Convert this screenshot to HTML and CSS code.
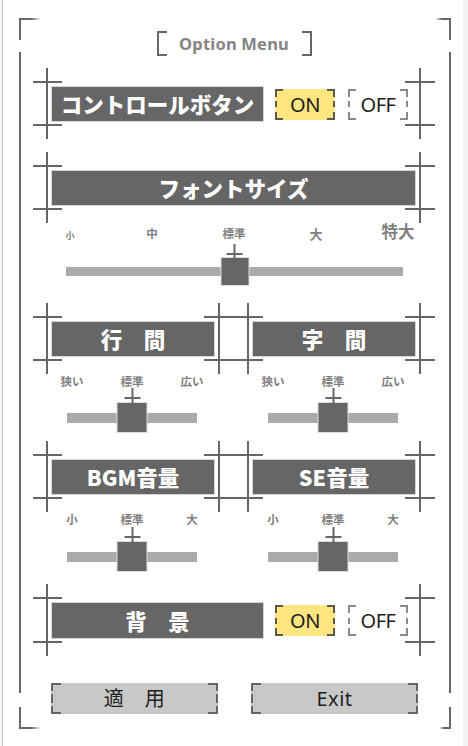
FILE: index.html
```html
<!DOCTYPE html>
<html lang="ja">
<head>
    <meta charset="UTF-8">
    <meta name="viewport" content="width=device-width, initial-scale=1.0">
    <title>Option Menu</title>
    <link rel="stylesheet" href="styles.css">
</head>
<body>
    <div class="screen">
        <div class="frame">
            <div class="title">Option Menu</div>

            <!-- Control buttons -->
            <div class="mark row">
                <div class="label label-row">コントロールボタン</div>
                <button class="toggle on">ON</button>
                <button class="toggle off">OFF</button>
            </div>

            <!-- Font size -->
            <div class="mark mark-font">
                <div class="label">フォントサイズ</div>
            </div>
            <div class="scale scale-5">
                <span class="sz1">小</span>
                <span class="sz2">中</span>
                <span class="sz2">標準</span>
                <span class="sz3">大</span>
                <span class="sz4">特大</span>
            </div>
            <div class="slider slider-lg">
                <div class="track"></div>
                <div class="thumb" style="left: 50%"></div>
            </div>

            <!-- Line / letter spacing -->
            <div class="pair pair-space">
                <div class="col">
                    <div class="mark"><div class="label">行　間</div></div>
                    <div class="scale scale-3"><span>狭い</span><span>標準</span><span>広い</span></div>
                    <div class="slider">
                        <div class="track"></div>
                        <div class="thumb" style="left: 50%"></div>
                    </div>
                </div>
                <div class="col">
                    <div class="mark"><div class="label">字　間</div></div>
                    <div class="scale scale-3"><span>狭い</span><span>標準</span><span>広い</span></div>
                    <div class="slider">
                        <div class="track"></div>
                        <div class="thumb" style="left: 50%"></div>
                    </div>
                </div>
            </div>

            <!-- Volume -->
            <div class="pair pair-sound">
                <div class="col">
                    <div class="mark"><div class="label">BGM音量</div></div>
                    <div class="scale scale-3"><span>小</span><span>標準</span><span>大</span></div>
                    <div class="slider">
                        <div class="track"></div>
                        <div class="thumb" style="left: 50%"></div>
                    </div>
                </div>
                <div class="col">
                    <div class="mark"><div class="label">SE音量</div></div>
                    <div class="scale scale-3"><span>小</span><span>標準</span><span>大</span></div>
                    <div class="slider">
                        <div class="track"></div>
                        <div class="thumb" style="left: 50%"></div>
                    </div>
                </div>
            </div>

            <!-- Background -->
            <div class="mark row mark-bg">
                <div class="label label-row">背　景</div>
                <button class="toggle on">ON</button>
                <button class="toggle off">OFF</button>
            </div>

            <div class="actions">
                <button class="action">適　用</button>
                <button class="action">Exit</button>
            </div>
        </div>
    </div>
</body>
</html>
```

FILE: styles.css
```css
* {
    box-sizing: border-box;
    margin: 0;
    padding: 0;
}
body {
    background-color: #f4f4f4;
    font-family: "Noto Sans", "Noto Sans CJK JP", sans-serif;
    width: 468px;
    height: 746px;
    overflow: hidden;
}
.screen {
    margin-left: 2px;
    width: 461px;
    height: 746px;
    border-left: 1px solid #c4c4c4;
    background: #fff;
    padding-top: 18px;
}

/* outer frame: corner arms and broken side lines */
.frame {
    margin-left: 16px;
    width: 432px;
    height: 711px;
    padding: 13px 16px 0 14px;
    background:
        linear-gradient(to right, #666 55%, rgba(102, 102, 102, 0)) left top / 22px 2px,
        linear-gradient(to left, #666 55%, rgba(102, 102, 102, 0)) right top / 16px 2px,
        linear-gradient(to right, #666 55%, rgba(102, 102, 102, 0)) left bottom / 22px 2px,
        linear-gradient(to left, #666 55%, rgba(102, 102, 102, 0)) right bottom / 12px 2px,
        linear-gradient(#666, #666) left top / 2px 22px,
        linear-gradient(#666, #666) left 0 top 34px / 2px calc(100% - 70px),
        linear-gradient(#666, #666) left bottom / 2px 22px,
        linear-gradient(#666, #666) right top / 2px 22px,
        linear-gradient(#666, #666) right 0 top 34px / 2px calc(100% - 70px),
        linear-gradient(#666, #666) right bottom / 2px 22px;
    background-repeat: no-repeat;
}

.title {
    width: 155px;
    height: 25px;
    margin: 0 auto;
    display: flex;
    align-items: center;
    justify-content: center;
    font-family: "Noto Sans", sans-serif;
    font-weight: 700;
    font-size: 16.5px;
    letter-spacing: 0.2px;
    color: #858585;
    padding-bottom: 1px;
    background:
        linear-gradient(#666, #666) left top / 2px 100%,
        linear-gradient(#666, #666) left top / 10px 2px,
        linear-gradient(#666, #666) left bottom / 10px 2px,
        linear-gradient(#666, #666) right top / 2px 100%,
        linear-gradient(#666, #666) right top / 10px 2px,
        linear-gradient(#666, #666) right bottom / 10px 2px;
    background-repeat: no-repeat;
}

/* crosshair marks round a heading */
.mark {
    padding: 19px 20px 18px 19px;
    margin-top: 12px;
    background:
        linear-gradient(#666, #666) left 13px top 0 / 2px 100%,
        linear-gradient(#666, #666) right 14px top 0 / 2px 100%,
        linear-gradient(#666, #666) left 0 top 13px / 29px 2px,
        linear-gradient(#666, #666) left 0 bottom 13px / 29px 2px,
        linear-gradient(#666, #666) right 0 top 13px / 30px 2px,
        linear-gradient(#666, #666) right 0 bottom 13px / 30px 2px;
    background-repeat: no-repeat;
}
.mark-font { margin-top: 13px; }
.col .mark { margin-top: 0; }

.label {
    height: 34px;
    background: #666;
    box-shadow: 0 0 0 1px #d6d6d6;
    color: #fff;
    font-family: "Noto Sans CJK JP", sans-serif;
    font-weight: 900;
    font-size: 21.5px;
    line-height: 34px;
    text-align: center;
    white-space: nowrap;
}

.row {
    display: flex;
    align-items: center;
}
.label-row {
    width: 211px;
    flex: none;
}
.mark-bg { margin-top: 13px; }
.mark-bg .label-row { height: 35px; line-height: 35px; }

/* bracket-cornered boxes */
.toggle, .action {
    --c: #666;
    --bg: #fff;
    border: none;
    font-family: "Noto Sans", "Noto Sans CJK JP", sans-serif;
    color: #1e1e1e;
    background:
        linear-gradient(var(--c), var(--c)) left top / 8px 2px,
        linear-gradient(var(--c), var(--c)) left top / 2px 8px,
        linear-gradient(var(--c), var(--c)) right top / 8px 2px,
        linear-gradient(var(--c), var(--c)) right top / 2px 8px,
        linear-gradient(var(--c), var(--c)) left bottom / 8px 2px,
        linear-gradient(var(--c), var(--c)) left bottom / 2px 8px,
        linear-gradient(var(--c), var(--c)) right bottom / 8px 2px,
        linear-gradient(var(--c), var(--c)) right bottom / 2px 8px,
        linear-gradient(var(--c), var(--c)) left center / 2px 6px,
        linear-gradient(var(--c), var(--c)) right center / 2px 6px,
        linear-gradient(var(--bg), var(--bg));
    background-repeat: no-repeat;
}
.toggle {
    width: 60px;
    height: 31px;
    font-size: 20px;
    line-height: 31px;
    margin-left: 12px;
    letter-spacing: -0.5px;
}
.toggle.off {
    margin-left: 13px;
    --c: #8a8a8a;
}
.toggle.on {
    --c: #5e5a48;
    --bg: #ffe680;
}

/* value labels above sliders */
.scale {
    display: grid;
    align-items: end;
    justify-items: center;
    font-family: "Noto Sans CJK JP", sans-serif;
    font-weight: 700;
    color: #808080;
    line-height: 1;
}
.scale-5 {
    grid-template-columns: repeat(5, 82px);
    margin-left: -4px;
    height: 16px;
}
.sz1 { font-size: 9px; }
.sz2 { font-size: 11.5px; }
.sz3 { font-size: 13px; }
.sz4 { font-size: 16.5px; }

.scale-3 {
    grid-template-columns: repeat(3, 60px);
    margin: 1px 0 0 9px;
    height: 14px;
    align-items: center;
    font-size: 11.5px;
}

.slider {
    position: relative;
    width: 130px;
    height: 29px;
    margin: 14px 0 0 34px;
}
.track {
    position: absolute;
    left: 0;
    right: 0;
    top: 10px;
    height: 10px;
    background: #aaa;
}
.thumb {
    position: absolute;
    top: 0;
    width: 29px;
    height: 29px;
    transform: translateX(-50%);
    background: #666;
    box-shadow: 0 0 0 1px #dcdcdc;
}
.thumb::before, .thumb::after {
    content: "";
    position: absolute;
    left: 50%;
    background: #666;
}
.thumb::before {
    top: -15px;
    width: 2px;
    height: 15px;
    margin-left: -1px;
}
.thumb::after {
    top: -6px;
    width: 16px;
    height: 2px;
    margin-left: -8px;
}

.slider-lg {
    width: 337px;
    height: 27px;
    margin: 19px 0 0 33px;
}
.slider-lg .track { top: 9px; height: 9px; }
.slider-lg .thumb { width: 27px; height: 27px; }
.slider-lg .thumb::before { top: -14px; height: 14px; }
.slider-lg .thumb::after { top: -5px; }

.pair {
    display: grid;
    grid-template-columns: 201px 201px;
}
.pair-space { margin-top: 18px; }
.pair-sound { margin-top: 9px; }
.pair-sound .slider { margin-top: 15px; }

.actions {
    display: flex;
    gap: 33px;
    margin: 27px 0 0 18px;
}
.action {
    --bg: #c8c8c8;
    width: 167px;
    height: 31px;
    font-size: 20px;
    line-height: 31px;
    letter-spacing: 0.5px;
}
.action {
    background-size:
        10px 2px, 2px 8px, 10px 2px, 2px 8px,
        10px 2px, 2px 8px, 10px 2px, 2px 8px,
        2px 9px, 2px 9px, auto;
}
```
